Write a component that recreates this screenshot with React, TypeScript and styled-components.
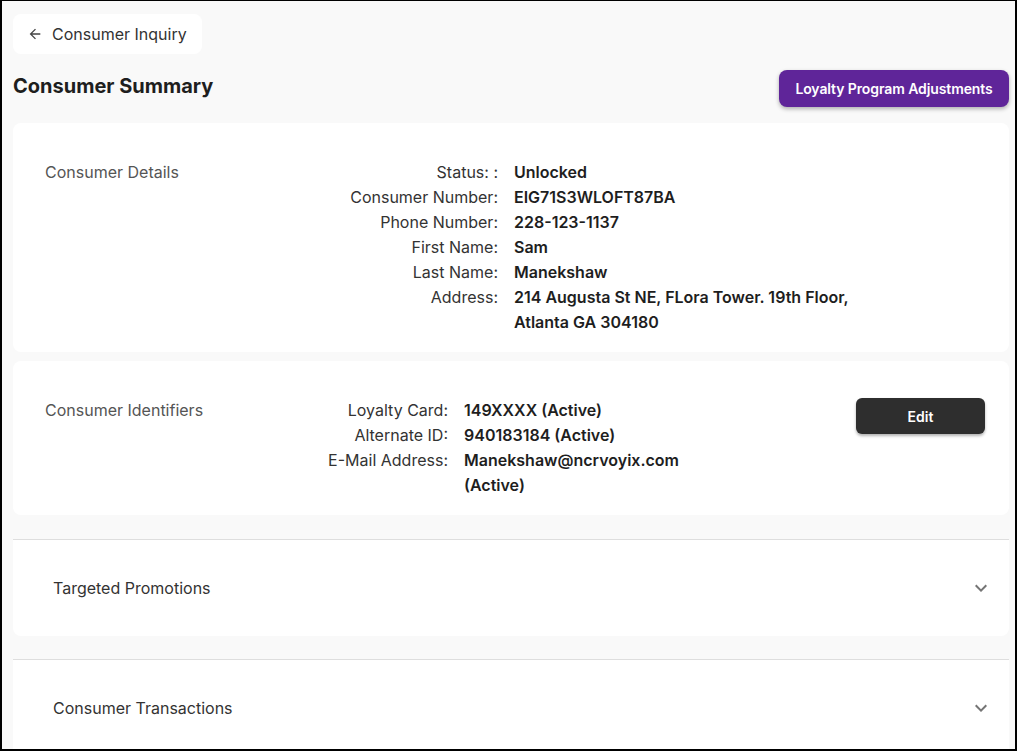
import styled, { createGlobalStyle } from "styled-components";
import React from "react";

const GlobalStyle = createGlobalStyle`
  body {
    margin: 0;
    font-family: Inter, "Noto Sans", "Liberation Sans", sans-serif;
  }
`;

const Frame = styled.div`
  width: 1017px;
  height: 751px;
  box-sizing: border-box;
  border: 2px solid #000;
  border-top-width: 1px;
  background: #f9f9f9;
  overflow: hidden;
  padding: 13px 6px 0 11px;
`;

const BackButton = styled.button`
  display: inline-flex;
  align-items: center;
  gap: 9px;
  height: 40px;
  padding: 0 15px 0 14px;
  border: none;
  border-radius: 8px;
  background: #fff;
  color: #333;
  font-family: inherit;
  font-size: 16px;
  cursor: pointer;
`;

const Header = styled.div`
  display: flex;
  justify-content: space-between;
  align-items: flex-start;
  margin: 16px 0 16px;
`;

const PageTitle = styled.h1`
  margin: 4px 0 0;
  font-size: 20px;
  line-height: 24px;
  font-weight: 700;
  color: #1e1e1e;
`;

const PrimaryButton = styled.button`
  height: 37px;
  width: 230px;
  border: none;
  border-radius: 8px;
  background: #5f2599;
  color: #fff;
  font-family: inherit;
  font-size: 14px;
  font-weight: 600;
  letter-spacing: -0.1px;
  box-shadow: 0 2px 4px rgba(0, 0, 0, 0.3);
  cursor: pointer;
`;

const Card = styled.div`
  display: flex;
  align-items: flex-start;
  background: #fff;
  border-radius: 8px;
  padding: 37px 24px 17px 32px;

  & + & {
    margin-top: 9px;
  }
`;

const CardTitle = styled.div`
  width: 252px;
  flex-shrink: 0;
  font-size: 16px;
  line-height: 24px;
  color: #555;
`;

const DetailGrid = styled.div<{ $labelWidth: number; $valueWidth: number }>`
  display: grid;
  grid-template-columns: ${(p) => p.$labelWidth}px ${(p) => p.$valueWidth}px;
  column-gap: 16px;
  font-size: 16px;
  line-height: 25px;
`;

const Label = styled.div`
  text-align: right;
  color: #333;
`;

const Value = styled.div`
  font-weight: 600;
  color: #1e1e1e;
`;

const DarkButton = styled.button`
  margin-left: auto;
  width: 129px;
  height: 36px;
  border: none;
  border-radius: 6px;
  background: #2e2e2e;
  color: #fff;
  font-family: inherit;
  font-size: 14px;
  font-weight: 600;
  box-shadow: 0 2px 3px rgba(0, 0, 0, 0.3);
  cursor: pointer;
`;

const Accordion = styled.div`
  margin-top: 24px;
  background: #fff;
  border-top: 1px solid #dedede;
  border-radius: 0 0 8px 8px;

  & + & {
    margin-top: 23px;
  }
`;

const AccordionSummary = styled.div`
  display: flex;
  align-items: center;
  justify-content: space-between;
  height: 96px;
  padding: 0 16px 0 40px;
  font-size: 16px;
  color: #333;
`;

const ArrowBack = () => (
  <svg width="16" height="16" viewBox="0 0 24 24" fill="#444">
    <path d="M20 11H7.83l5.59-5.59L12 4l-8 8 8 8 1.41-1.41L7.83 13H20v-2z" />
  </svg>
);

const ExpandMore = () => (
  <svg width="24" height="24" viewBox="0 0 24 24" fill="#757575">
    <path d="M16.59 8.59 12 13.17 7.41 8.59 6 10l6 6 6-6z" />
  </svg>
);

const consumerDetails: [string, string][] = [
  ["Status: :", "Unlocked"],
  ["Consumer Number:", "EIG71S3WLOFT87BA"],
  ["Phone Number:", "228-123-1137"],
  ["First Name:", "Sam"],
  ["Last Name:", "Manekshaw"],
  ["Address:", "214 Augusta St NE, FLora Tower. 19th Floor, Atlanta GA 304180"],
];

const identifiers: [string, string][] = [
  ["Loyalty Card:", "149XXXX (Active)"],
  ["Alternate ID:", "940183184 (Active)"],
  ["E-Mail Address:", "Manekshaw@ncrvoyix.com (Active)"],
];

const sections = ["Targeted Promotions", "Consumer Transactions"];

const App: React.FC = () => {
  return (
    <>
      <GlobalStyle />
      <Frame>
        <BackButton>
          <ArrowBack />
          Consumer Inquiry
        </BackButton>

        <Header>
          <PageTitle>Consumer Summary</PageTitle>
          <PrimaryButton>Loyalty Program Adjustments</PrimaryButton>
        </Header>

        <Card>
          <CardTitle>Consumer Details</CardTitle>
          <DetailGrid $labelWidth={201} $valueWidth={360}>
            {consumerDetails.map(([label, value]) => (
              <React.Fragment key={label}>
                <Label>{label}</Label>
                <Value>{value}</Value>
              </React.Fragment>
            ))}
          </DetailGrid>
        </Card>

        <Card>
          <CardTitle>Consumer Identifiers</CardTitle>
          <DetailGrid $labelWidth={151} $valueWidth={230}>
            {identifiers.map(([label, value]) => (
              <React.Fragment key={label}>
                <Label>{label}</Label>
                <Value>{value}</Value>
              </React.Fragment>
            ))}
          </DetailGrid>
          <DarkButton>Edit</DarkButton>
        </Card>

        {sections.map((title) => (
          <Accordion key={title}>
            <AccordionSummary>
              {title}
              <ExpandMore />
            </AccordionSummary>
          </Accordion>
        ))}
      </Frame>
    </>
  );
};

export default App;
